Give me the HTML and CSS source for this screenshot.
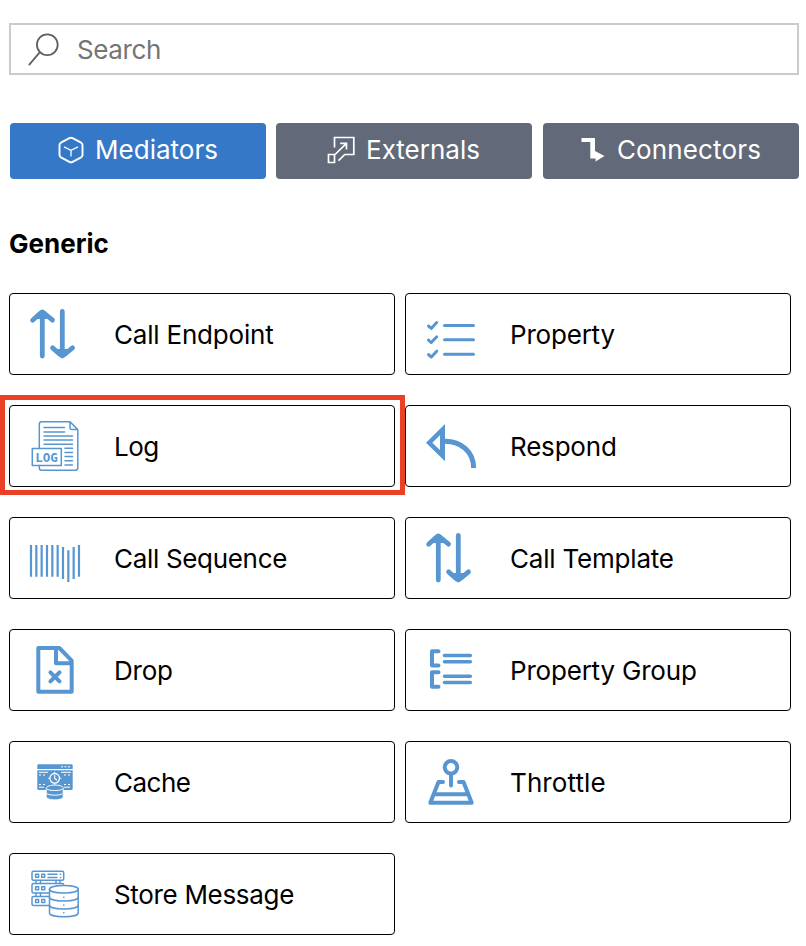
FILE: index.html
```html
<!DOCTYPE html>
<html lang="en">
<head>
<meta charset="utf-8">
<title>Mediators</title>
<link rel="stylesheet" href="styles.css">
</head>
<body>
<main class="palette">
  <label class="search">
    <svg class="search-icon" viewBox="0 0 32 34"><circle cx="19.3" cy="11.7" r="10.4"/><path d="M11.7 19.3 1.3 31.6"/></svg>
    <input class="search-input" type="text" placeholder="Search">
  </label>

  <nav class="tabs">
    <button class="tab tab-active">
      <svg width="28" height="28" viewBox="0 0 28 28"><path stroke-width="1.9" stroke-linejoin="round" d="M12.4 2.1 3.9 6.7Q2.5 7.5 2.5 9V19Q2.5 20.5 3.9 21.3L12.4 25.9Q14 26.7 15.6 25.9L24.1 21.3Q25.5 20.5 25.5 19V9Q25.5 7.5 24.1 6.7L15.6 2.1Q14 1.3 12.4 2.1Z"/><path stroke-width="1.3" d="M7 10.8 14 14.3 21 10.8M14 14.3V20.5"/></svg>
      <span>Mediators</span>
    </button>
    <button class="tab tab-externals">
      <svg width="28" height="28" viewBox="0 0 28 28"><path stroke-width="1.7" d="M7.5 11.5V1.5H26.8V18.5H17.8L11.5 24.6M8 18.5 19.5 7.3M13.2 7.3H19.5V13.6M1.5 18.5H7.5V26.5H1.5Z"/></svg>
      <span>Externals</span>
    </button>
    <button class="tab tab-connectors">
      <svg width="24" height="28" viewBox="0 0 24 28"><path class="solid" d="M.5 2H14V15L23.5 20 14.6 25.5V22.5H9.3V6H.5Z"/></svg>
      <span>Connectors</span>
    </button>
  </nav>

  <h2 class="heading">Generic</h2>

  <section class="grid">
    <div class="card">
      <svg class="icon" viewBox="0 0 80 80"><path class="w5" d="M32.3 18V62M22.6 26.2 30 19.5Q32.3 17.3 34.6 19.5L42.5 26.2M52.3 17.5V62M42.6 53.9 50 60.5Q52.3 62.5 54.6 60.5L62.5 53.9"/><path class="fill" d="M32.3 17 24.8 25H39.8ZM52.3 63 44.8 55H59.8Z"/></svg>
      <span class="label">Call Endpoint</span>
    </div>
    <div class="card">
      <svg class="icon" viewBox="0 0 80 80"><path class="w3" d="M38.5 31.5H67.5M38.5 45.8H67.5M38.5 60.2H67.5M22.5 32 25.3 34.4 30.7 28.6M22.5 46.2 25.3 48.6 30.7 42.8M22.5 60.6 25.3 63 30.7 57.2"/></svg>
      <span class="label">Property</span>
    </div>
    <div class="card card-marked">
      <svg class="icon" viewBox="0 0 80 80"><g class="w15"><path d="M29.3 42V18Q29.3 15.7 31.5 15.7H60L67.8 23.6V62Q67.8 64.2 65.6 64.2H31.5Q29.3 64.2 29.3 62V59.5M60 15.7V21.6Q60 23.6 62 23.6H67.8"/><path d="M34 21.6H54.5M34 25.9H54.5M34 30H62.5M34 34.1H62.5M34 38.2H62.5M55 42.2H62.5M55 46.4H62.5M55 50.6H62.5M55 54.8H62.5M55 59H62.5"/><rect x="22.3" y="42.4" width="29" height="17"/></g><text class="log-text" x="25.3" y="55.5">LOG</text></svg>
      <span class="label label-tight">Log</span>
    </div>
    <div class="card">
      <svg class="icon" viewBox="0 0 80 80"><path class="fill" fill-rule="evenodd" d="M20 36.7 39 18V55.3ZM26.3 36.7 34 29.3V44Z"/><path class="arc" d="M38 35.3C55 34.8 67.6 46 67.6 62"/></svg>
      <span class="label">Respond</span>
    </div>
    <div class="card">
      <svg class="icon" viewBox="0 0 80 80"><path class="bars" d="M21 27V58.7M26.33 27V58.7M31.66 27V58.7M37 27V58.7M42.33 27V58.7M47.66 27V58.7M53 29V61M58.33 32.3V64M63.66 29V61M69 27V58.7"/></svg>
      <span class="label label-snug">Call Sequence</span>
    </div>
    <div class="card">
      <svg class="icon" viewBox="0 0 80 80"><path class="w5" d="M32.3 18V62M22.6 26.2 30 19.5Q32.3 17.3 34.6 19.5L42.5 26.2M52.3 17.5V62M42.6 53.9 50 60.5Q52.3 62.5 54.6 60.5L62.5 53.9"/><path class="fill" d="M32.3 17 24.8 25H39.8ZM52.3 63 44.8 55H59.8Z"/></svg>
      <span class="label">Call Template</span>
    </div>
    <div class="card">
      <svg class="icon" viewBox="0 0 80 80"><path class="w4" d="M28.3 18H49.3L61.7 30.7V61.8H28.3ZM46 18V33.3H61.7M40.4 42.3 49.5 51.4M49.5 42.3 40.4 51.4"/></svg>
      <span class="label">Drop</span>
    </div>
    <div class="card">
      <svg class="icon" viewBox="0 0 80 80"><path class="w4" d="M32.5 21.2H26V35.6H32.5M32.5 42.2H26V56.7H32.5"/><path class="w35" d="M38.5 25.5H64.3M38.5 31.7H64.3M38.5 46.3H64.3M38.5 52.5H64.3"/></svg>
      <span class="label">Property Group</span>
    </div>
    <div class="card">
      <svg class="icon" viewBox="0 0 80 80"><path class="fill" d="M27.3 27V23.6Q27.3 22.3 28.6 22.3H61.4Q62.7 22.3 62.7 23.6V27ZM27.3 28.2H62.7V46.7Q62.7 48 61.4 48H28.6Q27.3 48 27.3 46.7Z"/><path class="cut" d="M51 24.8H53M54.5 24.8H56.5M58 24.8H60M29 30.3H38M51 30.3H61M29 33H31M33 33H35M54 33H56M58 33H60M29 42.5H31M33 42.5H35M54 42.5H56M58 42.5H60M29 45.2H34M54 45.2H60"/><circle class="clock" cx="44.7" cy="36.3" r="4.8"/><path class="cut" d="M44.7 29.8V31.5M44.7 41V43M38.2 36.3H40M49.5 36.3H51.3"/><path class="hands" d="M44.7 33.5V36.5L46.7 38"/><path class="db" d="M36.2 46.2C36.2 42 53.2 42 53.2 46.2V54.8C53.2 59 36.2 59 36.2 54.8Z"/><path class="cut" d="M37 47C39 49 50.5 49 52.5 47M37 51.5C39 53.7 50.5 53.7 52.5 51.5"/></svg>
      <span class="label label-tight">Cache</span>
    </div>
    <div class="card">
      <svg class="icon" viewBox="0 0 80 80"><path class="w4" d="M45 32V43.5M37 40H32.5L24.3 60.8H65.7L57.5 40H53M28 52.3H62"/><circle class="w4" cx="45" cy="25.3" r="6.3"/></svg>
      <span class="label label-wide">Throttle</span>
    </div>
    <div class="card">
      <svg class="icon" viewBox="0 0 80 80"><g class="w15"><rect x="22" y="17.2" width="31.7" height="9" rx="1.5"/><rect x="22" y="29.6" width="31.7" height="9.4" rx="1.5"/><rect x="22" y="42.4" width="31.7" height="9.2" rx="1.5"/><path d="M25.6 20.2H28.6V23.2H25.6ZM31.7 20.2H34.7V23.2H31.7ZM25.6 32.8H28.6V35.8H25.6ZM31.7 32.8H34.7V35.8H31.7ZM25.6 45.5H28.6V48.5H25.6ZM31.7 45.5H34.7V48.5H31.7Z"/><path d="M38 20.3H47M38 23.6H47M50.3 20.3H50.6M50.3 23.6H50.6M26 26.5V29.5M30.5 26.5V29.5M46 26.5V29.5M50 26.5V29.5M26 39V42M30.5 39V42"/><path class="store" d="M39.5 35.3C39.5 30.2 68.2 30.2 68.2 35.3V59C68.2 64 39.5 64 39.5 59Z"/><path d="M39.5 35.3C39.5 40.2 68.2 40.2 68.2 35.3M39.5 43.3C39.5 48.2 68.2 48.2 68.2 43.3M39.5 51.2C39.5 56.1 68.2 56.1 68.2 51.2M53.7 43.2H53.9M53.7 51H53.9M53.7 58.7H53.9"/></g></svg>
      <span class="label label-snug">Store Message</span>
    </div>
  </section>
</main>
</body>
</html>
```
FILE: styles.css
```css
*, *::after { box-sizing: border-box; }
body { margin: 0; background: #fff; color: #000; font: 400 26px/32px Inter, "Liberation Sans", sans-serif; }
svg { display: block; flex: none; fill: none; }
.palette { padding: 23px 7px 0 9px; }
.search { display: flex; align-items: center; height: 52px; width: 790px; border: 2px solid #cbcbcb; padding-left: 17px; }
.search-icon { width: 32px; height: 34px; margin-top: 1px; stroke: #606060; stroke-width: 1.8; stroke-linecap: round; }
.search-input { flex: 1; min-width: 0; height: 40px; margin-left: 17px; padding: 0; border: 0; outline: 0; background: none; font: inherit; letter-spacing: -0.4px; }
.search-input::placeholder { color: #757575; opacity: 1; }
.tabs { display: grid; grid-template-columns: 256px 256px 256px; column-gap: 10px; width: 789px; margin: 48px 0 0 1px; }
.tab { display: flex; align-items: center; justify-content: center; gap: 10px; height: 56px; padding: 0 1px 2px 0; border: 0; border-radius: 4px; background: #626a79; color: #fff; font: inherit; }
.tab svg { stroke: #fff; }
.tab .solid { fill: #fff; stroke: none; }
.tab-active { background: #3578c8; }
.tab-externals { gap: 11px; }
.tab-connectors { gap: 12px; width: 256px; margin-left: 1px; padding-right: 0; letter-spacing: 0.15px; }
.heading { margin: 49px 0 33px; font-size: 26px; font-weight: 700; line-height: 32px; }
.grid { display: grid; grid-template-columns: 386px 386px; column-gap: 10px; row-gap: 30px; }
.card { position: relative; display: flex; align-items: center; gap: 24px; height: 82px; border: 1px solid #000; border-radius: 4px; }
.card-marked::after { content: ""; position: absolute; left: -10px; top: -11px; width: 405px; height: 100px; border: 5px solid #eb4025; }
.label { padding-top: 2px; letter-spacing: -0.2px; }
.label-snug { letter-spacing: -0.32px; }
.label-tight { letter-spacing: -0.5px; }
.label-wide { letter-spacing: 0.1px; }
.icon { width: 80px; height: 80px; stroke: #5796d1; stroke-linecap: round; stroke-linejoin: round; }
.w5 { stroke-width: 4.8; }
.w4 { stroke-width: 4; }
.w35 { stroke-width: 3.6; }
.w3 { stroke-width: 3; }
.w15 { stroke-width: 1.5; }
.fill { fill: #5796d1; stroke: none; }
.arc { stroke-width: 5; stroke-linecap: butt; }
.bars { stroke-width: 2.2; stroke-linecap: butt; }
.cut { stroke: #fff; stroke-width: 1; stroke-linecap: butt; }
.clock { fill: #5796d1; stroke: #fff; stroke-width: 1.3; }
.hands { stroke: #fff; stroke-width: 1.1; }
.db { fill: #5796d1; stroke: #fff; stroke-width: 1; }
.store { fill: #fff; }
.log-text { fill: #5796d1; stroke: none; font: 700 12.5px "DejaVu Sans Mono", monospace; }
```
